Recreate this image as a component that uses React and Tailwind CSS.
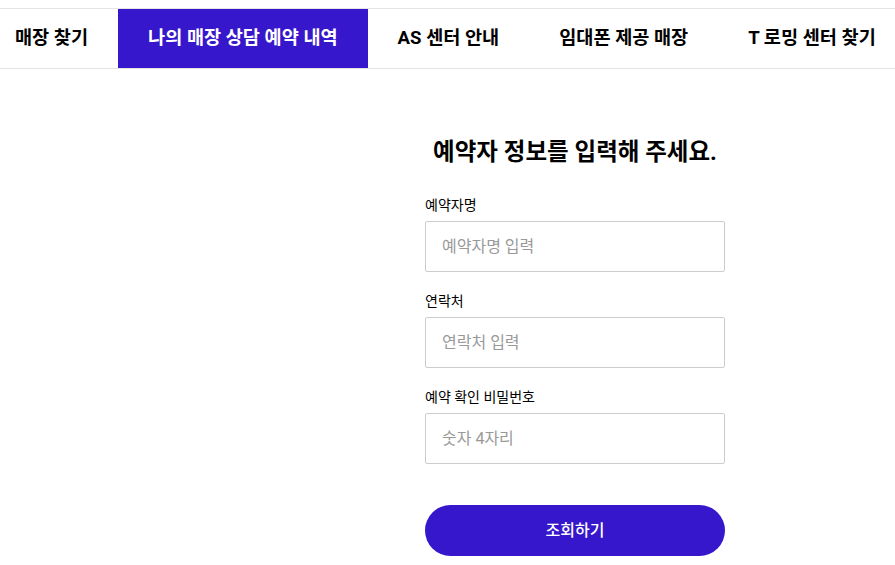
import React from 'react';

const tabs = ['매장 찾기', '나의 매장 상담 예약 내역', 'AS 센터 안내', '임대폰 제공 매장', 'T 로밍 센터 찾기'];

const fields = [
  { label: '예약자명', placeholder: '예약자명 입력' },
  { label: '연락처', placeholder: '연락처 입력' },
  { label: '예약 확인 비밀번호', placeholder: '숫자 4자리' },
];

export default function App() {
  const active = 1;

  return (
    <div
      className="min-h-screen overflow-hidden bg-white pt-2 text-black"
      style={{ fontFamily: 'Roboto, "Noto Sans CJK KR", sans-serif' }}
    >
      {/* 탭 메뉴 */}
      <nav className="border-y border-[#e4e4e4]">
        <ul className="-ml-[15px] flex h-[59px] whitespace-nowrap">
          {tabs.map((tab, i) => (
            <li
              key={tab}
              className={`flex items-center px-[30px] text-[18.6px] font-bold ${
                i === active ? 'bg-[#3717cb] text-white' : 'text-black'
              }`}
            >
              {tab}
            </li>
          ))}
        </ul>
      </nav>

      {/* 예약자 정보 입력 */}
      <main className="flex w-[1150px] justify-center pt-[68px]">
        <div className="w-[300px]">
          <h2 className="text-center text-[23.5px] font-bold leading-[30px]">
            예약자 정보를 입력해 주세요.
          </h2>

          <div className="mt-[28px] space-y-[19px]">
            {fields.map(field => (
              <div key={field.label}>
                <label className="block text-[14px] leading-[20px]">{field.label}</label>
                <input
                  type="text"
                  placeholder={field.placeholder}
                  className="mt-[6px] h-[51px] w-full rounded-[2px] border border-[#cccccc] px-[16px] text-[16px] outline-none placeholder:text-[#999999]"
                />
              </div>
            ))}
          </div>

          <button className="mt-[41px] h-[51px] w-full rounded-full bg-[#3717cb] text-[16px] font-medium text-white">
            조회하기
          </button>
        </div>
      </main>
    </div>
  );
}
